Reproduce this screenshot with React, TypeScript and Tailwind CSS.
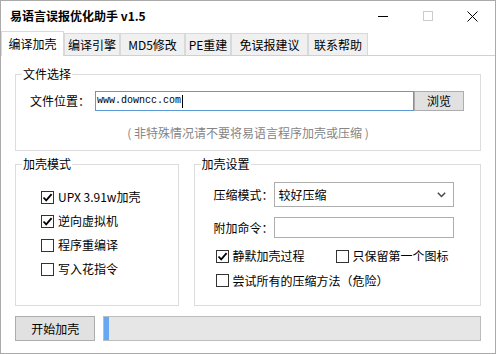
import React from "react";
import clsx from "clsx";

const tabs = [
  { label: "编译加壳", w: "w-[63px]" },
  { label: "编译引擎", w: "w-[56px]" },
  { label: "MD5修改", w: "w-[65px]" },
  { label: "PE重建", w: "w-[46px]" },
  { label: "免误报建议", w: "w-[77px]" },
  { label: "联系帮助", w: "w-[60px]" },
];

const CheckBox = ({
  label,
  checked,
  className,
}: {
  label: string;
  checked?: boolean;
  className?: string;
}) => (
  <label className={clsx("flex items-center gap-[4px]", className)}>
    <span className="w-[13px] h-[13px] shrink-0 border border-[#333333] bg-white flex items-center justify-center">
      {checked && (
        <svg width="11" height="11" viewBox="0 0 11 11">
          <path d="M1.5 5.5 L4.2 8.3 L9.6 2.2" fill="none" stroke="#000" strokeWidth="1.8" />
        </svg>
      )}
    </span>
    <span className="leading-[16px]">{label}</span>
  </label>
);

const Group = ({
  title,
  className,
  children,
}: {
  title: string;
  className?: string;
  children: React.ReactNode;
}) => (
  <fieldset className={clsx("border border-[#dcdcdc] min-w-0", className)}>
    <legend className="ml-[6px] px-[1px] leading-[16px]">{title}</legend>
    {children}
  </fieldset>
);

export default function App() {
  return (
    <div className="w-[496px] h-[354px] border border-[#aaaaaa] bg-white flex flex-col text-[12px] text-black font-['Noto_Sans_CJK_SC',sans-serif]">
      {/* title bar */}
      <div className="h-[30px] flex items-center shrink-0">
        <span className="pl-[9px] font-bold leading-[16px] flex-1">易语言误报优化助手 v1.5</span>
        <div className="w-[45px] h-full flex items-center justify-center">
          <span className="w-[10px] h-px bg-black" />
        </div>
        <div className="w-[45px] h-full flex items-center justify-center">
          <span className="w-[10px] h-[10px] border border-[#cccccc]" />
        </div>
        <div className="w-[45px] h-full flex items-center justify-center">
          <svg width="11" height="11" viewBox="0 0 11 11">
            <path d="M0.5 0.5 L10.5 10.5 M10.5 0.5 L0.5 10.5" stroke="#000" strokeWidth="1" />
          </svg>
        </div>
      </div>

      {/* tabs */}
      <div className="h-[25px] shrink-0 flex items-end border-b border-[#d0d0d0]">
        {tabs.map((tab, i) => (
          <div
            key={tab.label}
            className={clsx(
              tab.w,
              "flex items-center justify-center leading-[16px] border border-[#d9d9d9]",
              i === 0
                ? "h-[25px] -mb-px bg-white border-b-0"
                : "h-[22px] bg-[#f0f0f0] border-b-0"
            )}
          >
            {tab.label}
          </div>
        ))}
      </div>

      {/* tab content */}
      <div className="flex-1 px-[14px] flex flex-col">
        <Group title="文件选择" className="mt-[10px] h-[85px]">
          <div className="mt-[9px] flex items-center h-[20px] pl-[14px]">
            <span className="w-[65px] leading-[16px]">文件位置：</span>
            <div className="w-[319px] h-[20px] border border-[#5b9bd5] bg-white flex items-center pl-[1px]">
              <span className="font-['Liberation_Mono',monospace] text-[10px] leading-[14px]">www.downcc.com</span>
              <span className="w-px h-[13px] bg-black ml-[1px]" />
            </div>
            <button className="w-[50px] h-[20px] border border-[#adadad] bg-[#e1e1e1] leading-[16px]">浏览</button>
          </div>
          <p className="mt-[14px] leading-[16px] text-center text-[#858585]">( 非特殊情况请不要将易语言程序加壳或压缩 )</p>
        </Group>

        <div className="mt-[5px] h-[150px] flex gap-[15px]">
          <Group title="加壳模式" className="w-[165px] h-[150px]">
            <div className="pt-[13px] pl-[25px] flex flex-col">
              <CheckBox label="UPX 3.91w加壳" checked className="h-[24px]" />
              <CheckBox label="逆向虚拟机" checked className="h-[24px]" />
              <CheckBox label="程序重编译" className="h-[24px]" />
              <CheckBox label="写入花指令" className="h-[24px]" />
            </div>
          </Group>

          <Group title="加壳设置" className="w-[290px] h-[150px]">
            <div className="pl-[19px] flex flex-col">
              <div className="mt-[10px] h-[25px] flex items-center">
                <span className="w-[60px] leading-[16px]">压缩模式：</span>
                <div className="w-[180px] h-[25px] border border-[#adadad] bg-white flex items-center pl-[4px] pr-[7px]">
                  <span className="flex-1 leading-[16px]">较好压缩</span>
                  <svg width="9" height="6" viewBox="0 0 9 6">
                    <path d="M0.8 0.8 L4.5 4.6 L8.2 0.8" fill="none" stroke="#444" strokeWidth="1.4" />
                  </svg>
                </div>
              </div>
              <div className="mt-[10px] h-[21px] flex items-center">
                <span className="w-[60px] leading-[16px]">附加命令：</span>
                <div className="w-[180px] h-[21px] border border-[#adadad] bg-white" />
              </div>
              <div className="mt-[6px] h-[24px] flex items-center pl-[2px]">
                <CheckBox label="静默加壳过程" checked className="w-[120px]" />
                <CheckBox label="只保留第一个图标" />
              </div>
              <div className="h-[25px] flex items-center pl-[2px]">
                <CheckBox label="尝试所有的压缩方法（危险）" />
              </div>
            </div>
          </Group>
        </div>

        <div className="mt-[10px] h-[25px] flex gap-[8px]">
          <button className="w-[81px] h-[25px] border border-[#adadad] bg-[#e1e1e1] leading-[16px]">开始加壳</button>
          <div className="w-[380px] h-[25px] border border-[#bcbcbc] bg-[#e6e6e6] flex">
            <span className="w-[5px] h-full bg-[#66a9f2]" />
          </div>
        </div>
      </div>
    </div>
  );
}
